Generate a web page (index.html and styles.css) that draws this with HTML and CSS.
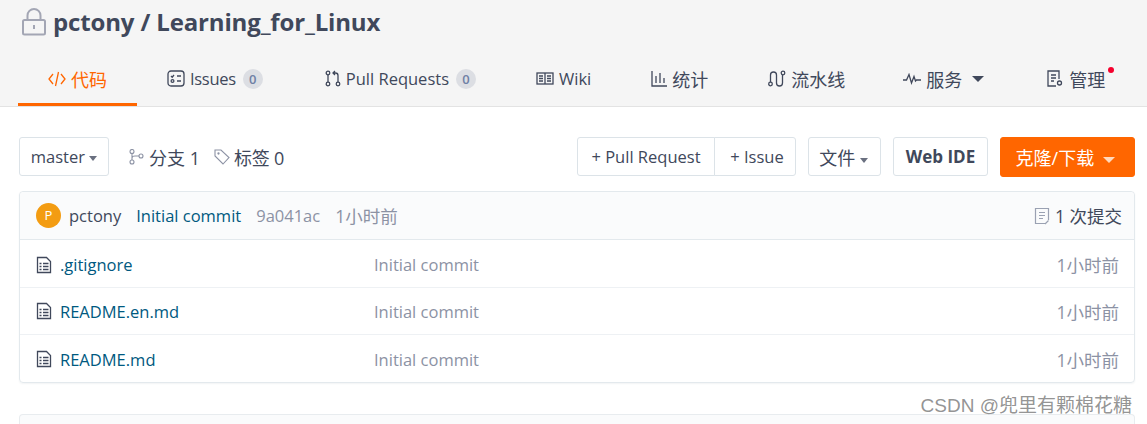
FILE: index.html
```html
<!doctype html>
<html lang="zh-CN">
<head>
	<meta charset="UTF-8">
	<title>pctony / Learning_for_Linux</title>
	<link rel="stylesheet" href="styles.css">
</head>
<body>
	<header class="repo-head">
		<h1 class="repo-title">
			<svg class="lock-icon" width="26" height="28" viewBox="0 0 26 28" fill="none" stroke="#a3a6b4" stroke-width="2">
				<rect x="2" y="12" width="22" height="14.500" rx="1.500"/>
				<path d="M6.500 12V7.500a6.500 6.500 0 0 1 13 0V12"/>
				<path d="M13 17v4"/>
			</svg>
			<span>pctony / Learning_for_Linux</span>
		</h1>
		<nav class="tabs">
			<a class="tab active">
				<svg width="18" height="16" viewBox="0 0 18 16" fill="none" stroke="#f60" stroke-width="1.300"><path d="M5 3 1 8l4 5M13 3l4 5-4 5M10.500 1 7.500 15"/></svg>
				<span class="cjk">代码</span>
			</a>
			<a class="tab tab-issues">
				<svg width="18" height="18" viewBox="0 0 18 18" fill="none" stroke="#40485b" stroke-width="1.300"><rect x="1" y="1" width="16" height="15" rx="3"/><path d="M4 6l1.200 1.200L7 5M10 6h4M10 11h4"/><circle cx="5.500" cy="11" r="1.400"/></svg>
				<span class="issues-label">Issues</span>
				<i class="count">0</i>
			</a>
			<a class="tab">
				<svg width="16" height="17" viewBox="0 0 16 17" fill="none" stroke="#40485b" stroke-width="1.300"><circle cx="3" cy="3" r="1.800"/><circle cx="3" cy="14" r="1.800"/><circle cx="13" cy="14" r="1.800"/><path d="M3 5v7M13 12V5.500Q13 3 10.500 3H8M10 1 8 3l2 2"/></svg>
				<span>Pull Requests</span>
				<i class="count">0</i>
			</a>
			<a class="tab">
				<svg width="18" height="14" viewBox="0 0 18 14" fill="none" stroke="#40485b" stroke-width="1.300"><rect x="1" y="1" width="16" height="11"/><path d="M9 1v11M3 4h4M3 6.500h4M3 9h4M11 4h4M11 6.500h4M11 9h4"/></svg>
				<span>Wiki</span>
			</a>
			<a class="tab">
				<svg width="16" height="16" viewBox="0 0 16 16" fill="none" stroke="#40485b" stroke-width="1.300"><path d="M1 0v15h15M5 5v7M9 2v10M13 7v5"/></svg>
				<span class="cjk">统计</span>
			</a>
			<a class="tab tab-pipeline">
				<svg width="18" height="17" viewBox="0 0 18 17" fill="none" stroke="#40485b" stroke-width="1.300"><circle cx="2.500" cy="14" r="1.800"/><circle cx="15" cy="3" r="1.800"/><path d="M2.500 12V5a3 3 0 0 1 6 0v8a3 3 0 0 0 6 0V5"/></svg>
				<span class="cjk">流水线</span>
			</a>
			<a class="tab tab-service">
				<svg width="18" height="12" viewBox="0 0 18 12" fill="none" stroke="#40485b" stroke-width="1.300"><path d="M0 7h3.500L6 1.500 8.500 10 11 3.500 12.500 8l1-1H18"/></svg>
				<span class="cjk">服务</span>
				<i class="caret tab-caret"></i>
			</a>
			<a class="tab tab-last">
				<svg width="17" height="17" viewBox="0 0 17 17" fill="none" stroke="#40485b" stroke-width="1.300"><path d="M12 9V1H1v15h8M4 5h5M4 8h5M4 11h3"/><circle cx="12.500" cy="13" r="2"/></svg>
				<span class="cjk">管理</span>
				<i class="dot"></i>
			</a>
		</nav>
	</header>

	<main class="content">
		<div class="toolbar">
			<button class="btn branch-btn">master <i class="caret small"></i></button>
			<a class="meta-link first">
				<svg width="15" height="16" viewBox="0 0 15 16" fill="none" stroke="#8c92a4" stroke-width="1.100"><circle cx="3" cy="2.500" r="2"/><circle cx="3" cy="13" r="2"/><circle cx="12" cy="7" r="2"/><path d="M3 4.500V11M3 9q0-2 3-2h4"/></svg>
				<span class="cjk">分支 1</span>
			</a>
			<a class="meta-link tag-link">
				<svg width="16" height="16" viewBox="0 0 16 16" fill="none" stroke="#8c92a4" stroke-width="1.100"><path d="M1 1h6l8 7.500L9 15 1 7z"/><circle cx="4.500" cy="4.500" r=".6"/></svg>
				<span class="cjk">标签 0</span>
			</a>
			<div class="toolbar-right">
				<div class="btn-group">
					<button class="btn">+ Pull Request</button>
					<button class="btn">+ Issue</button>
				</div>
				<button class="btn file-btn"><span class="cjk">文件</span> <i class="caret small"></i></button>
				<button class="btn ide-btn">Web IDE</button>
				<button class="btn clone-btn"><span class="cjk">克隆/下载</span> <i class="caret light"></i></button>
			</div>
		</div>

		<section class="file-card">
			<div class="commit-row">
				<span class="avatar">P</span>
				<a class="author">pctony</a>
				<a class="commit-msg">Initial commit</a>
				<span class="muted">9a041ac</span>
				<span class="muted cjk">1小时前</span>
				<a class="commit-total">
					<svg width="16" height="18" viewBox="0 0 16 18" fill="none" stroke="#9aa1b2" stroke-width="1.200"><path d="M11 16.500H1.500v-15h13V13M5 5.500h6M5 8.500h6M5 11.500h4M11 17l3.500-3.500"/></svg>
					<span class="cjk">1 次提交</span>
				</a>
			</div>
			<div class="file-row row-a row-first">
				<a class="file-name">
					<svg class="file-icon" width="16" height="18" viewBox="0 0 16 18" fill="none" stroke="#40485b" stroke-width="1.300"><path d="M1.500 1.500h9l4 4v11h-13z"/><path stroke-width="1.500" d="M3.500 7.500h2M3.500 10.500h2M3.500 13.500h2M7 7.500h5.500M7 10.500h5.500M7 13.500h5.500"/></svg>
					<span>.gitignore</span>
				</a>
				<span class="file-msg">Initial commit</span>
				<span class="file-time cjk">1小时前</span>
			</div>
			<div class="file-row row-b">
				<a class="file-name">
					<svg class="file-icon" width="16" height="18" viewBox="0 0 16 18" fill="none" stroke="#40485b" stroke-width="1.300"><path d="M1.500 1.500h9l4 4v11h-13z"/><path stroke-width="1.500" d="M3.500 7.500h2M3.500 10.500h2M3.500 13.500h2M7 7.500h5.500M7 10.500h5.500M7 13.500h5.500"/></svg>
					<span>README.en.md</span>
				</a>
				<span class="file-msg">Initial commit</span>
				<span class="file-time cjk">1小时前</span>
			</div>
			<div class="file-row row-a">
				<a class="file-name">
					<svg class="file-icon" width="16" height="18" viewBox="0 0 16 18" fill="none" stroke="#40485b" stroke-width="1.300"><path d="M1.500 1.500h9l4 4v11h-13z"/><path stroke-width="1.500" d="M3.500 7.500h2M3.500 10.500h2M3.500 13.500h2M7 7.500h5.500M7 10.500h5.500M7 13.500h5.500"/></svg>
					<span>README.md</span>
				</a>
				<span class="file-msg">Initial commit</span>
				<span class="file-time cjk">1小时前</span>
			</div>
		</section>

		<div class="next-card"></div>
	</main>

	<div class="watermark">CSDN @兜里有颗棉花糖</div>
</body>
</html>
```

FILE: styles.css
```css
html,body{height:100%;}
body{margin:0;height:424px;overflow:hidden;position:relative;background:#fff;color:#40485b;font-family:"Open Sans","Noto Sans CJK SC",sans-serif;font-size:16.500px;}
a{color:inherit;text-decoration:none;}
i{font-style:normal;}
svg{flex:none;}
.cjk{font-size:17.500px;}
.tab .cjk,.toolbar .cjk{font-size:18px;}

.repo-head{height:107px;box-sizing:border-box;background:#f5f5f5;border-bottom:1px solid #e3e3e3;}
.repo-title{margin:0;height:54px;padding:8px 0 0 21px;box-sizing:border-box;display:flex;align-items:flex-start;gap:6px;font-size:24px;line-height:28px;font-weight:700;color:#40485b;letter-spacing:-.15px;}

.tabs{display:flex;height:52px;padding-left:18px;}
.tab{display:flex;align-items:center;gap:5px;height:52px;padding:0 30px 3px;box-sizing:border-box;white-space:nowrap;}
.tab.active{color:#f60;border-bottom:3px solid #f60;padding-bottom:0;}
.issues-label{letter-spacing:-.3px;}
.tab-issues{padding-right:32px;}
.tab-pipeline{padding-right:28px;}
.tab-service{padding-right:33px;}
.tab-last{position:relative;}
.count{display:block;margin-left:2px;width:20px;height:20px;border-radius:50%;background:#dcdee3;color:#6f80a5;font-size:13px;font-weight:600;line-height:20px;text-align:center;}
.caret{display:inline-block;width:0;height:0;border-left:6px solid transparent;border-right:6px solid transparent;border-top:6px solid #40485b;}
.tab-caret{margin-left:5px;}
.caret.small{border-width:5px 4.500px 0;border-top-color:#6a7080;vertical-align:2px;}
.caret.light{border-top-color:#ffd9bd;margin-left:5px;vertical-align:2px;}
.dot{position:absolute;top:13px;right:21px;width:6px;height:6px;border-radius:50%;background:#f5002d;}

.content{padding:30px 12px 0 19px;}
.toolbar{display:flex;align-items:flex-start;height:40px;}
.toolbar-right{margin-left:auto;display:flex;align-items:flex-start;gap:12px;}
.btn{height:39px;padding:0 11px;box-sizing:border-box;border:1px solid #dce3e8;border-radius:3px;background:#fff;color:#40485b;font:inherit;white-space:nowrap;}
.btn-group{display:flex;}
.btn-group .btn:first-child{width:138px;border-radius:3px 0 0 3px;}
.btn-group .btn:last-child{width:82px;margin-left:-1px;padding:0 0 0 4px;border-radius:0 3px 3px 0;}
.file-btn{width:73px;padding:0 2px 0 0;}
.ide-btn{width:95px;padding:0;font-size:17px;font-weight:700;}
.clone-btn{width:135px;height:40px;padding:0 4px 0 0;background:#f60;border-color:#f60;color:#fff;}
.branch-btn{width:90px;padding:0;}
.meta-link{display:flex;align-items:center;gap:5px;height:39px;margin-left:14px;color:#40485b;}
.meta-link.first{margin-left:20px;}
.tag-link{gap:4px;}
.tag-link .cjk{letter-spacing:-.2px;}

.file-card{margin-top:14px;border:1px solid #e3e9ed;border-radius:4px;height:192px;box-sizing:border-box;box-shadow:0 1px 2px rgba(40,60,80,.06);}
.commit-row{display:flex;align-items:center;gap:15px;height:48px;padding:0 12px 0 16px;box-sizing:border-box;background:#fafbfc;border-bottom:1px solid #e3e9ed;border-radius:4px 4px 0 0;}
.avatar{width:25px;height:25px;border-radius:50%;background:#f39c12;color:#fff;font-size:13px;line-height:25px;text-align:center;margin-right:-7px;}
.author{color:#40485b;}
.commit-msg{color:#005980;}
.muted{color:#8c92a4;}
.commit-total{margin-left:auto;display:flex;align-items:center;gap:5px;color:#40485b;}

.file-row{display:flex;align-items:center;padding:0 15px 0 16px;box-sizing:border-box;border-bottom:1px solid #eef1f4;}
.file-row:last-child{border-bottom:0;}
.row-a{height:48px;}
.row-b{height:47px;}
.row-first{padding-top:2px;}
.file-name{width:338px;display:flex;align-items:center;gap:8px;color:#005980;}
.file-msg{color:#8c92a4;}
.file-time{margin-left:auto;color:#8c92a4;}

.next-card{margin-top:31px;height:9px;border:1px solid #e8ecef;border-bottom:0;border-radius:4px 4px 0 0;background:#fafbfc;}

.watermark{position:absolute;right:15px;top:394px;font-family:"Liberation Sans","Noto Sans CJK SC",sans-serif;font-size:19px;line-height:24px;color:rgba(120,120,120,.8);}
```
